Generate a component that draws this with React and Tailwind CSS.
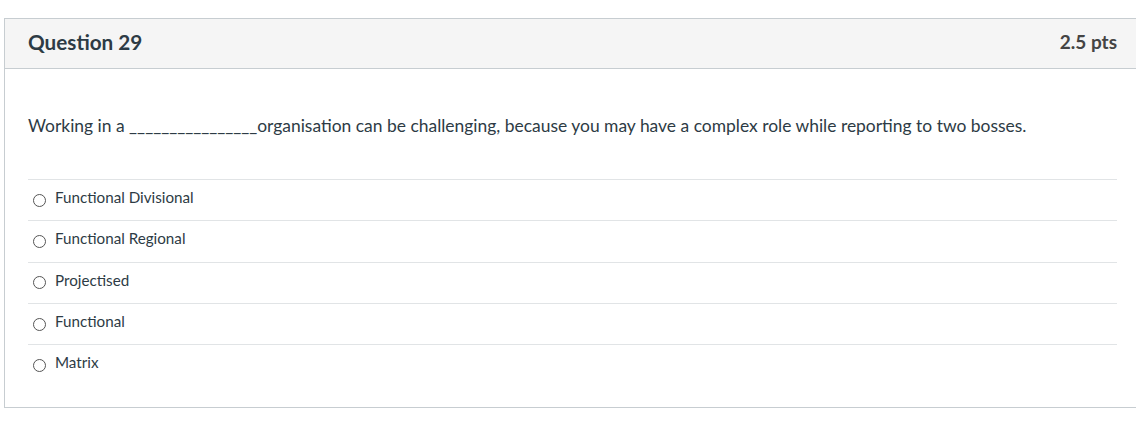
export default function App() {
    const answers = ['Functional Divisional', 'Functional Regional', 'Projectised', 'Functional', 'Matrix'];

    return (
        <div className="w-[1136px] h-[429px] overflow-hidden bg-white pt-[18px] pl-[4px] text-[#2d3b45]" style={{ fontFamily: 'Lato, "Liberation Sans", sans-serif' }}>
            <div className="w-[1137px] border border-[#c7cdd1]">
                {/* header */}
                <div className="h-[50px] flex items-center justify-between px-[23px] bg-[#f5f5f5] border-b border-[#c7cdd1]">
                    <h2 className="text-[20.7px] leading-[24px] font-bold -mt-[3px]">Question 29</h2>
                    <span className="text-[19px] leading-[24px] font-bold text-[#444] -mt-[3px]">2.5 pts</span>
                </div>

                {/* body */}
                <div className="px-[23px] pt-[45px] pb-[22px]">
                    <p className="text-[17.45px] leading-[24px] mb-[41px]">
                        Working in a ________________organisation can be challenging, because you may have a complex role while reporting to two bosses.
                    </p>
                    <div>
                        {answers.map((a) => (
                            <label key={a} className="h-[41.3px] flex items-center gap-[9px] pl-[5px] border-t border-[#e1e4e6] text-[15.2px] leading-[20px]">
                                <span className="w-[13px] h-[13px] rounded-full border border-[#555] bg-white"></span>
                                <span className="-mt-[6px]">{a}</span>
                            </label>
                        ))}
                    </div>
                </div>
            </div>
        </div>
    );
}
